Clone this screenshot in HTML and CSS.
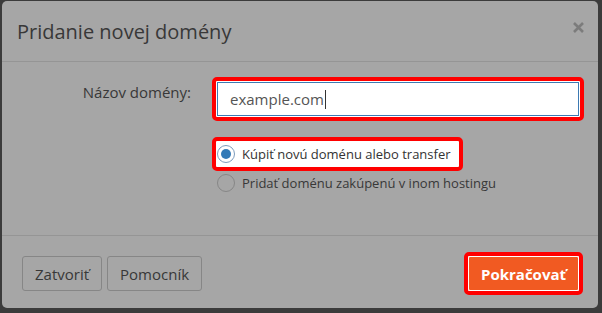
FILE: index.html
```html
<!DOCTYPE html>
<html lang="sk">
<head>
<meta charset="utf-8">
<title>Pridanie novej domény</title>
<link rel="stylesheet" href="styles.css">
</head>
<body>
<div class="modal">
  <div class="modal-header">
    <h4 class="title">Pridanie novej domény</h4>
    <span class="close" aria-label="Zavrieť">
      <svg width="11" height="11" viewBox="0 0 11 11"><path d="M1 1 L10 10 M10 1 L1 10" stroke="#7c7c7c" stroke-width="2.6" stroke-linecap="butt"/></svg>
    </span>
  </div>
  <div class="modal-body">
    <div class="row">
      <label class="label">Názov domény:</label>
      <div class="field">
        <div class="hl hl-input">
          <div class="input"><span>example.com</span><span class="caret"></span></div>
        </div>
        <div class="options">
          <div class="hl hl-radio"><span class="radio checked"><span class="dot"></span></span><span>Kúpiť novú doménu alebo transfer</span></div>
          <div class="option"><span class="radio"></span><span>Pridať doménu zakúpenú v inom hostingu</span></div>
        </div>
      </div>
    </div>
  </div>
  <div class="modal-footer">
    <button class="btn">Zatvoriť</button>
    <button class="btn">Pomocník</button>
    <div class="hl hl-btn"><button class="btn-primary">Pokračovať</button></div>
  </div>
</div>
</body>
</html>
```
FILE: styles.css
```css
html, body {
  margin: 0;
  height: 100%;
}
body {
  background: #3b3b3b;
  font-family: "Open Sans", "DejaVu Sans", sans-serif;
  overflow: hidden;
}
.modal {
  margin: 1px 4px 0 2px;
  height: 307px;
  background: #a6a6a6;
  border-radius: 5px;
  display: flex;
  flex-direction: column;
}
.modal-header {
  display: flex;
  align-items: flex-start;
  padding: 21px 14px 19px 15px;
  border-bottom: 1px solid #959595;
}
.title {
  flex: 1;
  margin: 0;
  font-size: 20px;
  font-weight: 400;
  line-height: 20px;
  color: #383838;
}
.close {
  display: flex;
  margin-top: 0;
}
.modal-body {
  flex: 1;
  padding: 15px 14px 0 0;
}
.row {
  display: flex;
}
.label {
  width: 189px;
  flex: none;
  box-sizing: border-box;
  margin-right: 21px;
  padding-top: 5px;
  text-align: right;
  font-size: 15px;
  line-height: 20px;
  color: #383838;
}
.field {
  flex: 1;
  min-width: 0;
}
.hl {
  border: 4px solid #ff0000;
  border-radius: 5px;
  background: #fff;
}
.hl-input {
  padding: 1px;
}
.input {
  height: 34px;
  box-sizing: border-box;
  border: 1px solid #3d7ab3;
  display: flex;
  align-items: center;
  padding-left: 12px;
  font-size: 15px;
  color: #555;
}
.caret {
  width: 1px;
  height: 19px;
  margin-left: 1px;
  background: #333;
}
.options {
  margin-top: 16px;
  display: flex;
  flex-direction: column;
  align-items: flex-start;
}
.hl-radio {
  display: flex;
  align-items: center;
  height: 26px;
  padding: 0 8px 0 1px;
  font-size: 13px;
  color: #333;
}
.radio {
  width: 18px;
  height: 18px;
  box-sizing: border-box;
  border-radius: 50%;
  border: 1px solid #868686;
  margin-right: 7px;
  display: flex;
  align-items: center;
  justify-content: center;
  flex: none;
}
.radio.checked {
  border-color: #7d9cbd;
}
.dot {
  width: 10px;
  height: 10px;
  border-radius: 50%;
  background: #337ab7;
}
.option {
  display: flex;
  align-items: center;
  height: 20px;
  margin-top: 2px;
  padding-left: 5px;
  font-size: 13px;
  color: #383838;
}
.modal-footer {
  display: flex;
  align-items: center;
  padding: 16px 15px 13px 20px;
  border-top: 1px solid #959595;
}
.btn {
  height: 35px;
  padding: 0 12px;
  margin-right: 5px;
  font-family: inherit;
  font-size: 15px;
  color: #383838;
  background: #a6a6a6;
  border: 1px solid #868686;
  border-radius: 3px;
}
.hl-btn {
  margin-left: auto;
  display: flex;
}
.btn-primary {
  height: 35px;
  padding: 0 12px;
  font-family: inherit;
  font-size: 15px;
  font-weight: 700;
  color: #fff;
  background: #f15a22;
  border: 1px solid #fff;
  border-radius: 2px;
}
```
